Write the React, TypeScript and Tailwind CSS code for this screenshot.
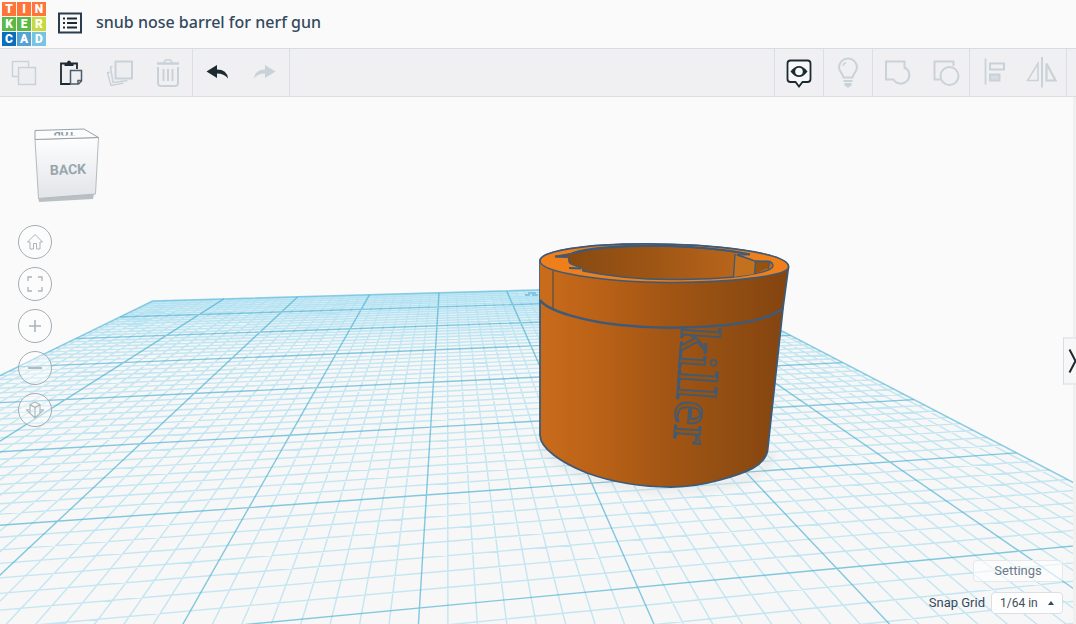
import React from "react";

/* ---------- Workplane ---------- */

const PLANE_MIN = 0.063;
const PLANE_MAX = 7.937;
const STEPS_PER_INCH = 8;

/* Perspective projection of a point on the workplane (in inches) to the view. */
function project(u: number, v: number): string {
  const depth = 6.984 + 0.1068 * u - 0.742 * v;
  const x = (1046 + 552 * u - 332 * v) / depth;
  const y = 157 + 1000 / depth;
  return `${x.toFixed(2)} ${y.toFixed(2)}`;
}

function gridPaths() {
  let minor = "";
  let major = "";
  for (let i = 1; i < 8 * STEPS_PER_INCH; i++) {
    const t = i / STEPS_PER_INCH;
    const d =
      `M${project(t, PLANE_MIN)}L${project(t, PLANE_MAX)}` +
      `M${project(PLANE_MIN, t)}L${project(PLANE_MAX, t)}`;
    if (i % STEPS_PER_INCH === 0) major += d;
    else minor += d;
  }
  return { minor, major };
}

const GRID = gridPaths();
const PLANE =
  `M${project(PLANE_MIN, PLANE_MIN)}L${project(PLANE_MAX, PLANE_MIN)}` +
  `L${project(PLANE_MAX, PLANE_MAX)}L${project(PLANE_MIN, PLANE_MAX)}Z`;

const BODY =
  "M540 261C540 251 585 244 645 244C715 244 789 253 788.500 267L783 308L767.500 451C764 466 748 472 720 480C702 485 690 487 671 487C640 487 612 482 587 473C560 462 540 448 540 435Z";
const RIM =
  "M540 261C540 251 585 244 645 244C715 244 789 253 788.500 267C788 276 730 282.500 672 282.500C600 282 540 272 540 261Z";
const HOLE =
  "M555 256.500L567 256.500C571 259 566 262 572 264.500L580 267.500C585 268 581 269 583 271C610 276.500 640 279.500 670 279.500C700 279.500 722 278.500 738 276.500C758 274 773 270 773 266C773 263 771 262 769 261.500L755 261L737 255L750 254.500C722 249 690 246.500 653 246C620 246 590 249 577 252.500Z";

function Scene() {
  return (
    <svg
      className="absolute inset-0 h-full w-full"
      viewBox="0 97 1073 527"
      preserveAspectRatio="xMidYMid slice"
      role="img"
      aria-label="Workplane with model"
    >
      <defs>
        <linearGradient id="outside" x1="540" x2="788" y1="0" y2="0" gradientUnits="userSpaceOnUse">
          <stop offset="0" stopColor="#c96b1b" />
          <stop offset="0.25" stopColor="#b96117" />
          <stop offset="0.5" stopColor="#a35614" />
          <stop offset="0.75" stopColor="#924e12" />
          <stop offset="1" stopColor="#844410" />
        </linearGradient>
        <linearGradient id="inside" x1="568" x2="772" y1="0" y2="0" gradientUnits="userSpaceOnUse">
          <stop offset="0" stopColor="#884a12" />
          <stop offset="0.4" stopColor="#9d5514" />
          <stop offset="0.8" stopColor="#b7641b" />
          <stop offset="1" stopColor="#c06a1c" />
        </linearGradient>
        <linearGradient id="haze" x1="0" x2="0" y1="290" y2="350" gradientUnits="userSpaceOnUse">
          <stop offset="0" stopColor="#d5eef7" />
          <stop offset="1" stopColor="#f7f7f7" />
        </linearGradient>
        <linearGradient id="cubeFace" x1="0" x2="0" y1="139" y2="197" gradientUnits="userSpaceOnUse">
          <stop offset="0" stopColor="#fdfdfe" />
          <stop offset="1" stopColor="#e2e5e9" />
        </linearGradient>
        <clipPath id="body">
          <path d={BODY} />
        </clipPath>
        <clipPath id="topFace">
          <path d="M45 132H85V135.500H45Z" />
        </clipPath>
        <clipPath id="below">
          <path d="M600 328H800V500H600Z" />
        </clipPath>
        <filter id="soft" x="-20%" y="-20%" width="140%" height="140%">
          <feGaussianBlur stdDeviation="4" />
        </filter>
      </defs>

      <path d={PLANE} fill="url(#haze)" />
      <path d={GRID.minor} fill="none" stroke="#8ad4ec" strokeOpacity="0.48" strokeWidth="1.400" />
      <path d={GRID.major} fill="none" stroke="#46aed2" strokeOpacity="0.66" strokeWidth="1.400" />
      <path d={PLANE} fill="none" stroke="#5eb9d9" strokeOpacity="0.7" strokeWidth="1.500" />
      <path d="M525 295h5m2 0h6m-10 -2h8" stroke="#4fa9cc" strokeWidth="1" />

      <path
        d="M541 440C545 456 570 472 600 480C650 494 700 492 740 480C765 473 770 462 772 450"
        fill="none"
        stroke="#9aa3ab"
        strokeOpacity="0.3"
        strokeWidth="4"
        filter="url(#soft)"
      />
      <path d={BODY} fill="url(#outside)" stroke="#3f5a76" strokeWidth="1.800" />
      <g clipPath="url(#body)">
        <path d="M540 261V300Q546 305 553 309V271Z" fill="#c86b1b" />
        <path d="M553 271V309" stroke="#5a5048" strokeWidth="1.300" />
      </g>
      <path d={RIM} fill="#ef7f1b" stroke="#3f5a76" strokeWidth="1.600" />
      <path d={HOLE} fill="url(#inside)" stroke="#3f5a76" strokeWidth="1.300" />
      <path d="M735 255L755 261.500L754.500 274L733.500 277Z" fill="#c3701f" />
      <path d="M755.500 261.500L770 261.500L768 268L755 273.500Z" fill="#96530f" />
      <path
        d="M735 254L733.500 277M737 255Q748 258 755.500 261.500L754.500 274M755 261.500L770 261.500L768 269"
        fill="none"
        stroke="#3f5a76"
        strokeWidth="1.300"
      />
      <path
        d="M555 256.500L567 257M569 268L581 268.500M572 253C590 247.500 620 245.500 653 245.500C690 246 722 248.500 750 254.500"
        fill="none"
        stroke="#3f5a76"
        strokeWidth="1.800"
      />
      <path
        d="M540 300C548 312 590 322 620 325C652 328.500 690 328.500 727 325C760 321 777 314 783 308"
        fill="none"
        stroke="#3f5a76"
        strokeWidth="2.500"
      />
      <g clipPath="url(#below)">
        <text
          transform="translate(682 325) rotate(94)"
          fontFamily="Liberation Serif, serif"
          fontSize="56"
          fill="#96530f"
          stroke="#3f5a76"
          strokeWidth="1.800"
        >
          killer
        </text>
      </g>

      {/* View cube */}
      <path d="M38 197L39 202L93 199L94 194Z" fill="#b9bfc2" />
      <path d="M35 139.500L98.500 137.500L95.500 194L38.500 198.500Z" fill="url(#cubeFace)" stroke="#b3bbc0" />
      <path d="M35 130.500L84 129L98.500 137.500L35 139.500Z" fill="#fcfcfd" stroke="#95a2aa" />
      <g clipPath="url(#topFace)">
        <text
          transform="translate(75 129) rotate(179)"
          fontFamily="Roboto, sans-serif"
          fontSize="11"
          fontWeight="700"
          fill="#8d999f"
        >
          TOP
        </text>
      </g>
      <text
        transform="translate(50 175) rotate(-2)"
        fontFamily="Roboto, sans-serif"
        fontSize="14"
        fontWeight="700"
        fill="#98a6ac"
      >
        BACK
      </text>
    </svg>
  );
}

/* ---------- Toolbar icons ---------- */

type IconProps = { children: React.ReactNode; muted?: boolean; size?: "md" | "lg" };

function Icon({ children, muted = true, size = "md" }: IconProps) {
  return (
    <svg
      viewBox={size === "md" ? "0 0 28 28" : "0 0 34 34"}
      className={`${size === "md" ? "size-7" : "size-[34px]"} ${muted ? "text-[#c9d2d8]" : "text-[#1c2a31]"}`}
      fill="none"
      stroke="currentColor"
      strokeWidth="1.500"
      aria-hidden="true"
    >
      {children}
    </svg>
  );
}

const CopyIcon = () => (
  <Icon>
    <path d="M8.500 17.500H2.500V2.500H18.500V8" />
    <path d="M8.500 8.500H25.500V25.500H8.500Z" fill="#eceef0" />
  </Icon>
);

const PasteIcon = () => (
  <Icon muted={false}>
    <path d="M12.500 25H3V4.500H19V10" strokeWidth="1.800" />
    <path d="M6.500 7V4H9Q9 1.500 11 1.500T13 4H15.500V7Z" fill="currentColor" stroke="none" />
    <path d="M12.500 11.500H23.500V22L20.500 25H12.500Z" stroke="#4b5c6b" fill="#f0f0f3" />
    <path d="M23.500 21.500H20V25" stroke="#4b5c6b" />
  </Icon>
);

const DuplicateIcon = () => (
  <Icon>
    <path d="M9.500 2.500H26V19.500H9.500Z" fill="#eceef0" strokeWidth="2" />
    <path d="M6.500 7.500L4.500 8L7 23.500L21.500 21.500" />
    <path d="M4 13L1.500 14L5 26.500L17.500 24" />
  </Icon>
);

const TrashIcon = () => (
  <Icon>
    <path d="M4 8V24Q4 27 7 27H21Q24 27 24 24V8" strokeWidth="2" />
    <path d="M3 4.500H25" strokeWidth="2.500" />
    <path d="M10 4Q10 .8 14 .8T18 4" />
    <path d="M9.500 10V22M14 10V22M18.500 10V22" strokeWidth="2" />
  </Icon>
);

const UndoIcon = () => (
  <Icon muted={false}>
    <path d="M3.500 12.500L14 6V10.500Q24 10.500 25 19.500Q21 14.500 14 14.500V19Z" fill="currentColor" stroke="none" />
  </Icon>
);

const RedoIcon = () => (
  <Icon>
    <path d="M24.500 12.500L14 6V10.500Q4 10.500 3 19.500Q7 14.500 14 14.500V19Z" fill="currentColor" stroke="none" />
  </Icon>
);

const EyeIcon = () => (
  <Icon muted={false} size="lg">
    <path
      d="M8.500 4.500H25.500Q28.500 4.500 28.500 7.500V23Q28.500 26 25.500 26H20.500L17 30.500L13.500 26H8.500Q5.500 26 5.500 23V7.500Q5.500 4.500 8.500 4.500Z"
      fill="#f8f8fa"
      strokeWidth="1.800"
    />
    <path d="M8.500 15.500Q17 4.500 25.500 15.500Q17 26.500 8.500 15.500Z" fill="currentColor" stroke="none" />
    <circle cx="17" cy="15.500" r="3.800" fill="#f8f8fa" stroke="none" />
  </Icon>
);

const BulbIcon = () => (
  <Icon size="lg">
    <path d="M12.500 21.500C12.500 18 8 16 8 11.500A9 9 0 0 1 26 11.500C26 16 21.500 18 21.500 21.500Z" strokeWidth="2" />
    <path d="M12 10Q12.500 7.500 15 6.500" />
    <path d="M12.500 25H21.500M13.500 28H20.500" strokeWidth="2" />
    <path d="M15 29.500H19L17 31Z" fill="currentColor" />
  </Icon>
);

const UnionIcon = () => (
  <Icon size="lg">
    <path d="M6 5.500H24.500V11.500A8.500 8.500 0 1 1 13.500 23.500H6Z" strokeWidth="2" />
  </Icon>
);

const SubtractIcon = () => (
  <Icon size="lg">
    <path d="M12 23.500H6.500V5.500H25.500V10" strokeWidth="2" />
    <circle cx="21.500" cy="20" r="9" strokeWidth="2" />
  </Icon>
);

const AlignIcon = () => (
  <Icon size="lg">
    <path d="M8.500 2.500V28.500" strokeWidth="1.800" />
    <path d="M13 7.500H27V13.500H13Z" strokeWidth="2" />
    <path d="M13 18.500H22.500V24.500H13Z" strokeWidth="2" fill="#d7dee2" />
  </Icon>
);

const MirrorIcon = () => (
  <Icon size="lg">
    <path d="M17 1V31.500" strokeWidth="2" />
    <path d="M13 7.500V24.500H2.500Z" />
    <path d="M21.500 7.500V24.500H30.500Z" strokeWidth="2.200" />
  </Icon>
);

type Tool = { label: string; icon: React.ReactNode };

function ToolGroup({ tools, side }: { tools: Tool[]; side: "left" | "right" }) {
  return (
    <div className={`flex h-full border-[#d9dfe4] ${side === "left" ? "border-r" : "border-l"}`}>
      {tools.map((tool) => (
        <button key={tool.label} type="button" aria-label={tool.label} className="grid w-12 place-items-center">
          {tool.icon}
        </button>
      ))}
    </div>
  );
}

/* ---------- Header ---------- */

const TILES = [
  ["T", "bg-[#ff7439]"],
  ["I", "bg-[#ff7439]"],
  ["N", "bg-[#ff7439]"],
  ["K", "bg-[#5bba47]"],
  ["E", "bg-[#5bba47]"],
  ["R", "bg-[#c6d93f]"],
  ["C", "bg-[#0a6ebd]"],
  ["A", "bg-[#52a3d6]"],
  ["D", "bg-[#76c3e2]"],
];

function Header() {
  return (
    <header className="flex h-12 items-center bg-[#fafafa]">
      <a href="#home" aria-label="Tinkercad home" className="ml-0.5 grid grid-cols-3 gap-px bg-[#fdf3ea]">
        {TILES.map(([letter, color]) => (
          <span
            key={letter}
            className={`grid size-[14px] place-items-center text-[12px] leading-[14px] font-black text-white ${color}`}
          >
            {letter}
          </span>
        ))}
      </a>
      <button type="button" aria-label="Designs" className="ml-3 pb-0.5">
        <svg viewBox="0 0 24 22" className="h-[22px] w-6" fill="none" stroke="#2b3c4e" strokeWidth="2" aria-hidden="true">
          <path d="M1 1.500H23V20.500H1Z" />
          <path d="M9 6.500H19M9 11H19M9 15.500H19" stroke="#1c2a31" />
          <path d="M5 6.500H7M5 11H7M5 15.500H7" stroke="#1c2a31" />
        </svg>
      </button>
      <h1 className="ml-3.5 pb-1 font-['Noto_Sans',sans-serif] text-[16px] leading-5 font-medium text-[#34495e]">
        snub nose barrel for nerf gun
      </h1>
    </header>
  );
}

/* ---------- View controls ---------- */

const VIEW_CONTROLS: { label: string; path: string; strokeWidth: number }[] = [
  { label: "Home view", path: "M1.500 9L9 1.500L16.500 9H14V16H10.500V10.500H7.500V16H4V9Z", strokeWidth: 1 },
  { label: "Fit all in view", path: "M2 6V2H6M12 2H16V6M16 12V16H12M6 16H2V12", strokeWidth: 1.3 },
  { label: "Zoom in", path: "M9 3V15M3 9H15", strokeWidth: 1.6 },
  { label: "Zoom out", path: "M2 9H16", strokeWidth: 1.8 },
  {
    label: "Switch to flat view",
    path: "M9 1L14 3.500V12M9 1L4 3.500V12M4 3.500L9 6.500L14 3.500M9 6.500V17M0 8.500L9 17L18 8.500M0 9L4 8.500M18 9L14 8.500",
    strokeWidth: 1.1,
  },
];

export default function App() {
  return (
    <div className="flex min-h-screen flex-col bg-[#fafafa] font-[Roboto,sans-serif] text-[#34495e]">
      <Header />
      <div
        role="toolbar"
        aria-label="Editing tools"
        className="flex h-[49px] items-stretch justify-between border-y border-t-[#d6dde2] border-b-[#d9dfe4] bg-[#f0f0f3]"
      >
        <div className="flex">
          <ToolGroup
            side="left"
            tools={[
              { label: "Copy", icon: <CopyIcon /> },
              { label: "Paste", icon: <PasteIcon /> },
              { label: "Duplicate", icon: <DuplicateIcon /> },
              { label: "Delete", icon: <TrashIcon /> },
            ]}
          />
          <ToolGroup
            side="left"
            tools={[
              { label: "Undo", icon: <UndoIcon /> },
              { label: "Redo", icon: <RedoIcon /> },
            ]}
          />
        </div>
        <div className="flex">
          <ToolGroup side="right" tools={[{ label: "Notes", icon: <EyeIcon /> }]} />
          <ToolGroup side="right" tools={[{ label: "Show all", icon: <BulbIcon /> }]} />
          <ToolGroup
            side="right"
            tools={[
              { label: "Group", icon: <UnionIcon /> },
              { label: "Ungroup", icon: <SubtractIcon /> },
            ]}
          />
          <ToolGroup
            side="right"
            tools={[
              { label: "Align", icon: <AlignIcon /> },
              { label: "Mirror", icon: <MirrorIcon /> },
            ]}
          />
          <div className="w-[10px] border-l border-[#d9dfe4]" />
        </div>
      </div>

      <main className="relative flex flex-1 justify-between bg-[#f0f0f1] pr-[3px]">
        <div className="relative flex flex-1 justify-between overflow-hidden bg-[#fafafa]">
          <Scene />
          <nav aria-label="View" className="relative flex flex-col gap-2 pt-32 pb-5 pl-[18px]">
            {VIEW_CONTROLS.map((control) => (
              <button
                key={control.label}
                type="button"
                aria-label={control.label}
                className="grid size-[34px] place-items-center rounded-full border border-[#a3adb3] bg-white/40"
              >
                <svg viewBox="0 0 18 18" className="size-[18px]" fill="none" stroke="#adb4b8" strokeWidth={control.strokeWidth} aria-hidden="true">
                  <path d={control.path} />
                </svg>
              </button>
            ))}
          </nav>
          <div className="relative flex flex-col items-end justify-end gap-2.5 pr-2.5 pb-2.5">
            <button
              type="button"
              className="h-[22px] w-[90px] rounded-sm border border-[#e6e8ec] bg-white/60 text-[13px] leading-5 text-[#6b7a89]"
            >
              Settings
            </button>
            <div className="flex items-center gap-1.5">
              <label htmlFor="snap" className="text-[13px] leading-5">
                Snap Grid
              </label>
              <div className="relative">
                <select
                  id="snap"
                  defaultValue="1/64 in"
                  className="block h-[22px] w-[72px] appearance-none rounded-sm border border-[#dcdfe5] bg-white/90 pl-2 text-[12px] leading-5 text-[#444f59]"
                >
                  <option>1/64 in</option>
                  <option>1/32 in</option>
                  <option>1/16 in</option>
                  <option>1/8 in</option>
                </select>
                <svg viewBox="0 0 6 4" className="pointer-events-none absolute top-[9px] right-[9px] h-1 w-1.5" aria-hidden="true">
                  <path d="M0 4L3 0L6 4Z" fill="#34495e" />
                </svg>
              </div>
            </div>
          </div>
        </div>
        <button
          type="button"
          aria-label="Show shapes panel"
          className="absolute top-1/2 right-0 h-[47px] w-[13px] -translate-y-1/2 border border-r-0 border-[#d9dce4] bg-[#f7f7f8]"
        >
          <svg viewBox="0 0 12 45" className="h-full w-full" fill="none" stroke="#1c2a31" strokeWidth="2" aria-hidden="true">
            <path d="M5.500 11L11.500 22.500L5.500 34" />
          </svg>
        </button>
      </main>
    </div>
  );
}
